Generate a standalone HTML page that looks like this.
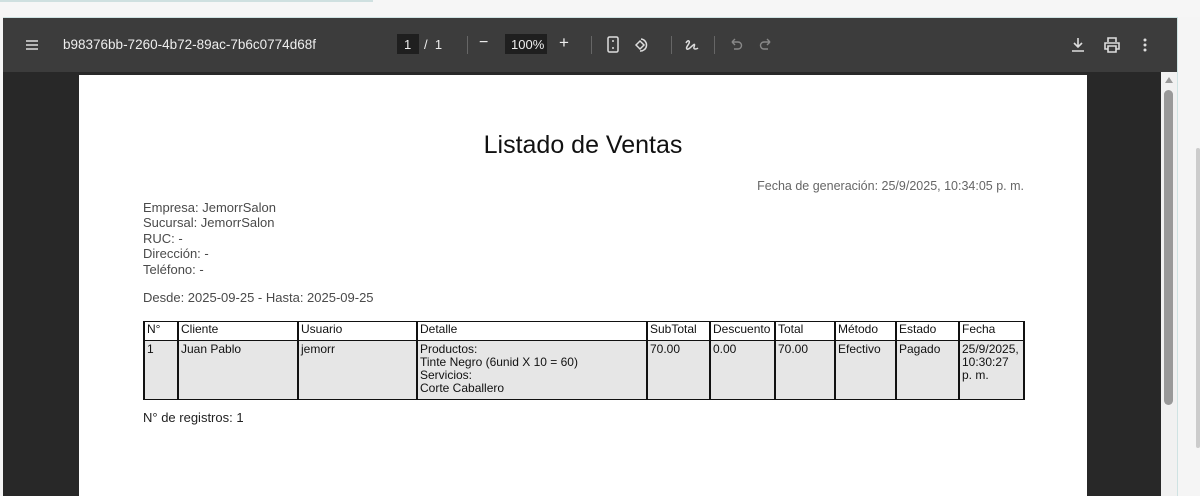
<!DOCTYPE html>
<html><head><meta charset="utf-8"><style>
*{margin:0;padding:0;box-sizing:border-box}
body{width:1200px;height:496px;overflow:hidden;background:#f5f5f5;font-family:"Liberation Sans",sans-serif;position:relative}
.abs{position:absolute}
#top{left:0;top:0;width:1200px;height:17px;background:#f6f6f6}
#tab{left:0;top:0;width:373px;height:2px;background:#cfe0e0}
#frame{left:3px;top:17px;width:1175px;height:479px;background:#282828;border-top:1px solid #cfe3e3}
#tb{left:3px;top:18px;width:1175px;height:54px;background:#3c3c3c;color:#eee;font-size:13px}
.t{position:absolute;top:19px;color:#eee;font-size:13px}
#page{left:79px;top:75px;width:1008px;height:421px;background:#fff;color:#4a4a4a}
.sep{position:absolute;top:18px;width:1px;height:18px;background:#666}
#sb{left:1161px;top:72px;width:16px;height:424px;background:#f1f1f1}
table{position:absolute;left:64px;top:246px;border-collapse:collapse;font-size:12px;color:#111}
td{border:2px solid #111;border-width:1px 2px;vertical-align:top;padding:0 2px;line-height:13px}
tr.h td{background:#fff;height:19px;padding-top:1px}
tr.b td{background:#e6e6e6;height:59px;padding-top:2px}
.info{position:absolute;left:64px;font-size:13px;line-height:15.4px}
</style></head><body>
<div class="abs" id="top"></div><div class="abs" id="tab"></div>
<div class="abs" id="frame"></div>
<div class="abs" id="tb">
 <svg class="abs" style="left:22px;top:21px" width="14" height="12"><path d="M1 2H13M1 6H13M1 10H13" stroke="#ddd" stroke-width="1.6"/></svg>
 <div class="t" style="left:60px;font-size:13.5px">b98376bb-7260-4b72-89ac-7b6c0774d68f</div>
 <div class="abs" style="left:394px;top:16px;width:22px;height:20px;background:#1f1f1f"></div>
 <div class="t" style="left:401px">1</div><div class="t" style="left:421px">/&nbsp;&nbsp;1</div>
 <div class="sep" style="left:464px"></div>
 <div class="t" style="left:476px;font-size:16px;top:16px">−</div>
 <div class="abs" style="left:502px;top:16px;width:42px;height:20px;background:#1f1f1f"></div>
 <div class="t" style="left:508px">100%</div>
 <div class="t" style="left:556px;font-size:17px;top:15px">+</div>
 <div class="sep" style="left:588px"></div>
 <svg class="abs" style="left:603px;top:18px" width="14" height="18"><rect x="2" y="1" width="10" height="15" rx="1.5" fill="none" stroke="#ddd" stroke-width="1.5"/><path d="M7 4v2M7 11v2" stroke="#ddd" stroke-width="1.5"/></svg>
 <svg class="abs" style="left:629px;top:18px" width="20" height="18"><path d="M4 9l4-4 4 4-4 4z" fill="none" stroke="#ddd" stroke-width="1.5"/><path d="M9 3a6 6 0 1 1 -1 12" fill="none" stroke="#ddd" stroke-width="1.5"/></svg>
 <div class="sep" style="left:668px"></div>
 <svg class="abs" style="left:680px;top:18px" width="18" height="18"><path d="M3 7c2-4 5-2 2 2s-1 6 3 2 4-3 3 0 3 2 4 1" fill="none" stroke="#ddd" stroke-width="1.5"/></svg>
 <div class="sep" style="left:711px"></div>
 <svg class="abs" style="left:725px;top:19px" width="16" height="16"><path d="M4 5h6a3.5 3.5 0 0 1 0 7H6M4 5l3-3M4 5l3 3" fill="none" stroke="#888" stroke-width="1.4"/></svg>
 <svg class="abs" style="left:755px;top:19px" width="16" height="16"><path d="M12 5H6a3.5 3.5 0 0 0 0 7h4M12 5L9 2M12 5L9 8" fill="none" stroke="#888" stroke-width="1.4"/></svg>
 <svg class="abs" style="left:1067px;top:18px" width="16" height="18"><path d="M8 2v9M4 7l4 4 4-4M2 15h12" fill="none" stroke="#ddd" stroke-width="1.6"/></svg>
 <svg class="abs" style="left:1100px;top:18px" width="18" height="18"><path d="M5 6V2h8v4M5 13H2V7h14v6h-3M5 10h8v6H5z" fill="none" stroke="#ddd" stroke-width="1.6"/></svg>
 <svg class="abs" style="left:1139px;top:19px" width="6" height="16"><circle cx="3" cy="3" r="1.5" fill="#ddd"/><circle cx="3" cy="8" r="1.5" fill="#ddd"/><circle cx="3" cy="13" r="1.5" fill="#ddd"/></svg>
</div>
<div class="abs" id="page">
 <div class="abs" style="left:0;width:1008px;top:56px;text-align:center;font-size:25px;color:#111">Listado de Ventas</div>
 <div class="abs" style="right:63px;top:104px;font-size:12.5px;color:#666">Fecha de generación: 25/9/2025, 10:34:05 p. m.</div>
 <div class="info" style="top:125px">Empresa: JemorrSalon<br>Sucursal: JemorrSalon<br>RUC: -<br>Dirección: -<br>Teléfono: -</div>
 <div class="info" style="top:215px">Desde: 2025-09-25 - Hasta: 2025-09-25</div>
 <table>
 <tr class="h"><td style="width:34px">N°</td><td style="width:120px">Cliente</td><td style="width:119px">Usuario</td><td style="width:230px">Detalle</td><td style="width:63px">SubTotal</td><td style="width:65px">Descuento</td><td style="width:60px">Total</td><td style="width:61px">Método</td><td style="width:63px">Estado</td><td style="width:65px">Fecha</td></tr>
 <tr class="b"><td>1</td><td>Juan Pablo</td><td>jemorr</td><td>Productos:<br>Tinte Negro (6unid X 10 = 60)<br>Servicios:<br>Corte Caballero</td><td>70.00</td><td>0.00</td><td>70.00</td><td>Efectivo</td><td>Pagado</td><td>25/9/2025,<br>10:30:27<br>p. m.</td></tr>
 </table>
 <div class="info" style="top:335px;color:#222">N° de registros: 1</div>
</div>
<div class="abs" id="sb">
 <svg class="abs" style="left:3px;top:4px" width="10" height="8"><path d="M1 7L5 1 9 7z" fill="#999"/></svg>
 <div class="abs" style="left:3px;top:18px;width:9px;height:315px;background:#999;border-radius:5px"></div>
</div>
<div class="abs" style="left:1177px;top:17px;width:1px;height:479px;background:#cfe3e3"></div>
<div class="abs" style="left:1196px;top:148px;width:4px;height:300px;background:#ccc;border-radius:2px"></div>
</body></html>
